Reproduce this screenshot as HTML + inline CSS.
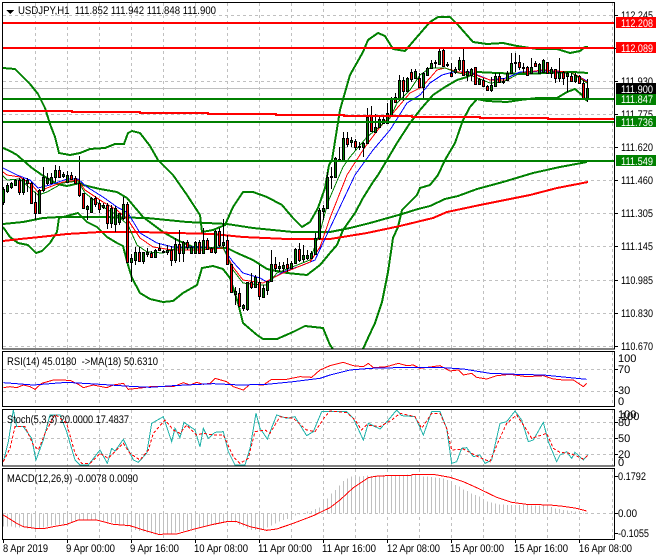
<!DOCTYPE html>
<html><head><meta charset="utf-8"><style>
html,body{margin:0;padding:0;background:#fff;width:660px;height:560px;overflow:hidden}
svg{display:block}
text{font-family:"Liberation Sans",sans-serif;font-size:11px;fill:#000}
.w{fill:#fff}
</style></head><body>
<svg width="660" height="560" viewBox="0 0 660 560" shape-rendering="crispEdges">
<rect width="660" height="560" fill="#fff"/>
<!-- grid -->
<g fill="none" stroke="#c0c0c0" stroke-dasharray="3 3">
<path d="M35.5 3V349M67.5 3V349M99.5 3V349M131.5 3V349M163.5 3V349M195.5 3V349M227.5 3V349M259.5 3V349M291.5 3V349M323.5 3V349M355.5 3V349M387.5 3V349M419.5 3V349M451.5 3V349M483.5 3V349M515.5 3V349M547.5 3V349M579.5 3V349M612.5 3V349"/>
<path d="M3 15.5H614M3 48.5H614M3 81.5H614M3 114.5H614M3 147.5H614M3 180.5H614M3 213.5H614M3 246.5H614M3 280.5H614M3 313.5H614M3 346.5H614"/>
<path d="M35.5 352V407M67.5 352V407M99.5 352V407M131.5 352V407M163.5 352V407M195.5 352V407M227.5 352V407M259.5 352V407M291.5 352V407M323.5 352V407M355.5 352V407M387.5 352V407M419.5 352V407M451.5 352V407M483.5 352V407M515.5 352V407M547.5 352V407M579.5 352V407M612.5 352V407"/>
<path d="M3 369.5H614M3 391.5H614"/>
<path d="M35.5 410V466M67.5 410V466M99.5 410V466M131.5 410V466M163.5 410V466M195.5 410V466M227.5 410V466M259.5 410V466M291.5 410V466M323.5 410V466M355.5 410V466M387.5 410V466M419.5 410V466M451.5 410V466M483.5 410V466M515.5 410V466M547.5 410V466M579.5 410V466M612.5 410V466"/>
<path d="M3 422.5H614M3 438.5H614M3 454.5H614"/>
<path d="M35.5 469V539M67.5 469V539M99.5 469V539M131.5 469V539M163.5 469V539M195.5 469V539M227.5 469V539M259.5 469V539M291.5 469V539M323.5 469V539M355.5 469V539M387.5 469V539M419.5 469V539M451.5 469V539M483.5 469V539M515.5 469V539M547.5 469V539M579.5 469V539M612.5 469V539"/>
<path d="M3 513.5H614"/>
</g>
<!-- current price line -->
<path d="M3 88.5H614" stroke="#c0c0c0" fill="none"/>
<!-- bands & long MAs -->
<g fill="none" stroke="#008000" stroke-width="2">
<polyline points="3,68 15,69 22,76 30,84 38,94 45,108 50,124 55,137 59,153 70,155 80,153 90,149 105,148 115,144 124,144 128,133 132,131 140,133 150,146 158,160 173,175 187,195 200,215 202,232 213,230 225,225 233,207 243,192 253,192 267,197 282,205 293,218 302,227 310,222 318,208 325,188 329,165 332,160 340,110 350,75 363,52 368,40 378,33 385,36 393,49 405,51 417,37 430,22 438,17 450,17 458,25 473,42 487,44 503,43 517,46 537,49 557,49 570,53 580,51 585,47 588,47"/>
<polyline points="3,227 10,237 18,243 28,245 36,253 42,251 50,243 57,232 59,218 67,216 78,213 87,222 97,227 107,237 117,243 123,246 128,265 132,278 140,293 150,299 163,302 173,301 183,293 197,285 202,268 213,266 223,269 230,278 238,303 243,323 257,335 263,339 277,339 293,332 305,326 323,328 330,345 333,349"/>
<polyline points="363,349 368,338 375,323 382,302 388,272 393,238 398,227 402,210 417,195 420,188 430,185 438,175 445,160 455,143 463,120 470,107 477,99 487,101 507,102 520,100 537,98 557,98 567,92 575,89 582,95 587,101"/>
<polyline points="3,148 10,151 17,155 25,162 32,168 42,175 57,184 67,186 80,183 83,185 100,189 117,192 127,198 143,217 163,232 177,240 193,247 213,248 227,248 237,253 253,260 267,269 287,273 307,275 320,265 330,253 337,245 343,230 355,213 363,198 373,182 378,175 387,160 397,143 410,123 420,110 433,95 445,87 457,80 467,77 477,72 497,73 523,74 547,73 573,72 588,73"/>
<polyline points="3,224 23,222 43,218 60,217 100,217 147,218 187,222 227,224 253,228 293,232 330,232 350,228 370,223 402,214 418,209 430,206 445,199 458,196 477,189 503,182 533,173 560,167 587,162"/>
</g>
<polyline fill="none" stroke="#ff0000" stroke-width="2" points="3,241 20,239 40,237 67,234 100,232 140,232 213,234 243,237 287,239 330,239 367,233 400,226 433,218 447,212 480,205 530,195 557,188 588,182"/>
<!-- thin MAs -->
<polyline fill="none" stroke="#0000ff" points="3,168 17,175 30,180 38,188 50,185 67,179 78,179 87,187 103,197 117,207 128,213 140,233 157,243 173,247 200,247 223,248 233,262 243,273 260,278 267,282 283,272 303,265 315,260 330,228 355,175 373,150 390,130 407,103 420,95 430,83 442,75 453,72 470,72 490,80 507,78 520,72 543,71 570,72 587,81"/>
<polyline fill="none" stroke="#ff0000" points="3,172 7,175 20,177 32,185 38,192 47,188 63,182 78,180 85,190 103,202 117,210 128,220 140,238 153,247 173,250 200,250 223,248 233,267 243,280 263,283 283,273 310,262 320,247 330,218 347,175 365,147 380,127 393,113 410,93 422,87 437,70 445,68 458,72 470,73 490,80 507,80 520,73 543,70 570,72 578,76 587,82"/>
<polyline fill="none" stroke="#008000" points="3,176 7,180 20,179 32,190 38,195 47,192 63,183 78,181 85,193 103,207 117,215 128,225 137,245 147,252 163,253 177,248 200,248 223,247 233,270 243,283 260,285 267,285 277,273 310,260 320,232 328,202 343,167 350,157 367,137 390,118 397,103 410,90 420,75 430,68 445,68 458,73 470,75 490,83 503,82 520,73 543,73 570,72 587,83"/>
<!-- candle wicks -->
<path fill="none" stroke="#000" d="M3.5 187V205M7.5 183V193M11.5 182V189M15.5 179V185M19.5 178V195M23.5 178V195M27.5 178V192M31.5 182V204M35.5 192V220M39.5 189V213M43.5 167V192M47.5 173V185M51.5 173V184M55.5 165V182M59.5 166V178M63.5 172V178M67.5 171V183M71.5 172V180M75.5 176V184M79.5 156V197M83.5 193V209M87.5 205V220M91.5 197V212M95.5 196V207M99.5 200V213M103.5 203V209M107.5 203V229M111.5 205V228M115.5 206V232M119.5 213V225M123.5 197V220M127.5 202V263M131.5 254V282M135.5 247V265M139.5 247V261M143.5 252V264M147.5 248V257M151.5 251V258M155.5 249V258M159.5 243V251M163.5 250V253M167.5 245V255M171.5 246V266M175.5 238V263M179.5 230V262M183.5 241V262M187.5 240V250M191.5 246V254M195.5 241V254M199.5 240V254M203.5 228V253M207.5 238V249M211.5 247V253M215.5 230V254M219.5 228V247M223.5 219V248M227.5 235V265M231.5 264V293M235.5 287V305M239.5 288V306M243.5 304V311M247.5 282V311M251.5 273V289M255.5 275V288M259.5 265V300M263.5 285V297M267.5 281V295M271.5 250V282M275.5 257V272M279.5 262V272M283.5 262V272M287.5 258V272M291.5 261V268M295.5 248V264M299.5 243V262M303.5 245V262M307.5 250V260M311.5 251V258M315.5 233V255M319.5 208V240M323.5 205V220M327.5 172V209M331.5 167V189M335.5 157V178M339.5 147V161M343.5 132V161M347.5 132V147M351.5 137V147M355.5 139V150M359.5 142V150M363.5 142V157M367.5 108V144M371.5 106V131M375.5 114V133M379.5 116V128M383.5 115V124M387.5 103V124M391.5 97V116M395.5 93V103M399.5 75V101M403.5 77V101M407.5 77V92M411.5 69V82M415.5 69V79M419.5 73V88M423.5 72V98M427.5 67V76M431.5 60V69M435.5 60V68M439.5 49V65M443.5 47V67M447.5 62V67M451.5 63V77M455.5 67V74M459.5 57V71M463.5 47V76M467.5 69V81M471.5 68V81M475.5 67V85M479.5 78V85M483.5 78V87M487.5 85V91M491.5 77V92M495.5 73V87M499.5 73V83M503.5 78V84M507.5 71V81M511.5 53V74M515.5 53V72M519.5 55V70M523.5 63V73M527.5 66V76M531.5 58V74M535.5 61V67M539.5 63V74M543.5 59V73M547.5 62V74M551.5 67V78M555.5 69V83M559.5 58V82M563.5 71V85M567.5 72V92M571.5 73V82M575.5 73V83M579.5 75V84M583.5 80V99M587.5 79V102"/>
<g transform="translate(0,.5)" stroke="#000">
<path fill="#008000" d="M2.5 189h2V202h-2zM6.5 185h2V191h-2zM10.5 183h2V187h-2zM14.5 180h2V185h-2zM22.5 179h2V192h-2zM26.5 180h2V183h-2zM38.5 190h2V213h-2zM42.5 177h2V190h-2zM46.5 178h2V183h-2zM50.5 177h2V183h-2zM54.5 170h2V177h-2zM62.5 174h2V176h-2zM66.5 175h2V182h-2zM86.5 206h2V209h-2zM90.5 198h2V212h-2zM102.5 205h2V207h-2zM110.5 208h2V223h-2zM114.5 208h2V224h-2zM118.5 213h2V222h-2zM122.5 204h2V218h-2zM130.5 258h2V262h-2zM134.5 252h2V260h-2zM142.5 252h2V261h-2zM146.5 252h2V254h-2zM154.5 250h2V257h-2zM162.5 251h2V252h-2zM166.5 250h2V252h-2zM174.5 244h2V260h-2zM182.5 242h2V253h-2zM190.5 247h2V253h-2zM194.5 242h2V253h-2zM202.5 240h2V253h-2zM214.5 231h2V252h-2zM222.5 242h2V245h-2zM234.5 291h2V294h-2zM242.5 305h2V308h-2zM246.5 282h2V309h-2zM254.5 277h2V287h-2zM262.5 288h2V297h-2zM266.5 281h2V290h-2zM270.5 264h2V281h-2zM278.5 266h2V268h-2zM282.5 265h2V268h-2zM290.5 263h2V268h-2zM294.5 249h2V263h-2zM302.5 255h2V259h-2zM306.5 255h2V258h-2zM310.5 253h2V258h-2zM314.5 238h2V254h-2zM318.5 210h2V238h-2zM322.5 208h2V211h-2zM326.5 177h2V208h-2zM330.5 176h2V177h-2zM334.5 158h2V177h-2zM338.5 159h2V160h-2zM342.5 138h2V160h-2zM350.5 140h2V142h-2zM358.5 146h2V147h-2zM362.5 143h2V147h-2zM366.5 117h2V143h-2zM374.5 127h2V132h-2zM378.5 119h2V127h-2zM382.5 119h2V123h-2zM386.5 113h2V123h-2zM390.5 99h2V115h-2zM398.5 80h2V99h-2zM406.5 78h2V91h-2zM414.5 71h2V78h-2zM422.5 73h2V87h-2zM426.5 68h2V75h-2zM430.5 63h2V68h-2zM434.5 62h2V63h-2zM438.5 51h2V64h-2zM446.5 64h2V65h-2zM454.5 69h2V72h-2zM458.5 60h2V69h-2zM466.5 71h2V75h-2zM470.5 69h2V75h-2zM478.5 79h2V84h-2zM490.5 85h2V90h-2zM494.5 76h2V86h-2zM502.5 81h2V82h-2zM506.5 73h2V80h-2zM510.5 63h2V73h-2zM514.5 62h2V63h-2zM522.5 67h2V68h-2zM530.5 67h2V73h-2zM538.5 64h2V73h-2zM542.5 60h2V72h-2zM550.5 69h2V73h-2zM558.5 72h2V78h-2zM566.5 73h2V76h-2zM574.5 75h2V81h-2zM586.5 88h2V98h-2z"/>
<path fill="#ff0000" d="M18.5 180h2V192h-2zM30.5 183h2V203h-2zM34.5 202h2V213h-2zM58.5 170h2V177h-2zM70.5 175h2V179h-2zM74.5 178h2V183h-2zM78.5 183h2V195h-2zM82.5 193h2V208h-2zM94.5 198h2V204h-2zM98.5 203h2V209h-2zM106.5 205h2V223h-2zM126.5 204h2V262h-2zM138.5 252h2V261h-2zM150.5 253h2V257h-2zM158.5 248h2V250h-2zM170.5 250h2V260h-2zM178.5 244h2V253h-2zM186.5 242h2V247h-2zM198.5 242h2V253h-2zM206.5 240h2V249h-2zM210.5 248h2V252h-2zM218.5 231h2V245h-2zM226.5 240h2V264h-2zM230.5 264h2V292h-2zM238.5 293h2V306h-2zM250.5 282h2V287h-2zM258.5 282h2V296h-2zM274.5 264h2V268h-2zM286.5 264h2V268h-2zM298.5 249h2V260h-2zM346.5 138h2V144h-2zM354.5 141h2V147h-2zM370.5 116h2V131h-2zM394.5 97h2V102h-2zM402.5 80h2V91h-2zM410.5 72h2V79h-2zM418.5 78h2V87h-2zM442.5 50h2V66h-2zM450.5 73h2V76h-2zM462.5 60h2V75h-2zM474.5 67h2V84h-2zM482.5 80h2V86h-2zM486.5 86h2V90h-2zM498.5 76h2V82h-2zM518.5 62h2V67h-2zM526.5 67h2V75h-2zM534.5 63h2V66h-2zM546.5 62h2V73h-2zM554.5 69h2V78h-2zM562.5 72h2V78h-2zM570.5 76h2V81h-2zM578.5 76h2V83h-2zM582.5 83h2V98h-2z"/>
</g>
<!-- horizontal levels -->
<g fill="none" stroke-width="2">
<path stroke="#ff0000" d="M3 23H615M3 48H615"/>
<path stroke="#ff0000" d="M3 111H72V112H140V113H208V114H276V115H344V116H412V117H480V118H548V119H614"/>
<path stroke="#008000" d="M3 99H615M3 122H615M3 161H615"/>
</g>
<!-- RSI -->
<g transform="translate(0,345) scale(.33333)" fill="none" stroke-width="3">
<polyline stroke="#ff0000" points="10,128 30,125 50,128 70,120 90,125 105,133 125,115 160,105 210,106 235,118 250,128 280,120 320,128 340,120 370,115 385,133 430,128 450,125 480,125 520,125 550,113 570,120 590,112 610,118 630,115 645,100 680,110 700,125 730,135 750,118 790,120 815,103 860,103 900,95 935,97 960,75 990,62 1030,52 1060,62 1090,65 1105,55 1120,68 1160,65 1195,55 1220,62 1240,60 1260,70 1320,62 1350,78 1375,75 1390,90 1415,85 1430,97 1460,102 1490,92 1530,88 1580,95 1630,92 1660,102 1690,105 1720,105 1750,125 1760,115"/>
<polyline stroke="#0000ff" points="10,113 100,120 200,112 300,118 390,124 450,127 520,122 640,116 720,120 800,118 880,110 960,100 990,90 1050,75 1110,70 1190,68 1260,68 1330,68 1390,72 1470,85 1550,88 1630,90 1760,103"/>
</g>
<!-- Stoch -->
<g transform="translate(0,345) scale(.33333)" fill="none" stroke-width="3">
<polyline stroke="#20b2aa" points="10,350 25,290 40,195 50,245 70,245 95,280 108,345 130,285 150,210 180,210 200,260 225,345 240,360 265,360 300,315 322,355 335,310 345,318 370,283 400,345 415,352 440,325 455,235 490,215 515,290 525,250 540,278 552,232 585,255 600,305 610,250 625,280 645,262 670,260 685,320 705,360 735,360 750,310 768,205 780,250 802,282 830,210 860,220 885,215 920,272 940,260 965,200 990,200 1040,200 1060,220 1090,285 1105,235 1140,252 1165,225 1190,195 1205,212 1245,215 1270,270 1295,200 1320,200 1340,250 1355,355 1370,350 1385,310 1400,308 1420,335 1440,330 1455,355 1475,345 1500,235 1520,230 1545,198 1565,225 1585,290 1600,285 1630,232 1645,290 1670,350 1680,330 1700,320 1715,340 1725,322 1750,345 1765,328"/>
<polyline stroke="#ff0000" stroke-dasharray="9 6" points="10,350 30,310 45,245 75,245 100,300 115,315 135,265 165,208 200,235 225,325 245,355 270,355 300,325 325,340 370,295 390,325 420,345 445,315 460,265 495,225 520,255 540,265 560,240 590,270 610,265 640,270 670,270 700,335 720,355 745,340 765,260 795,255 810,265 840,215 880,220 920,255 945,260 975,215 990,198 1040,203 1065,225 1085,255 1100,240 1140,245 1175,225 1200,205 1245,215 1265,250 1295,205 1320,205 1340,250 1355,315 1390,312 1420,328 1445,340 1470,350 1495,290 1520,235 1550,210 1580,255 1595,280 1640,265 1660,310 1680,322 1710,325 1750,342 1765,330"/>
</g>
<!-- MACD -->
<g transform="translate(0,345) scale(.33333)" fill="none" stroke-width="3">
<path stroke="#c0c0c0" d="M10.5 505V545M22.5 505V545M34.5 505V545M46.5 505V547M58.5 505V548M70.5 505V548M82.5 505V550M94.5 505V550M106.5 505V552M118.5 505V550M130.5 505V548M142.5 505V545M154.5 505V542M166.5 505V540M178.5 505V538M190.5 505V537M202.5 505V535M214.5 505V533M226.5 505V530M238.5 505V526M250.5 505V525M262.5 505V525M274.5 505V525M286.5 505V525M298.5 505V526M310.5 505V528M322.5 505V530M334.5 505V532M346.5 505V535M358.5 505V538M370.5 505V540M382.5 505V545M394.5 505V550M406.5 505V555M418.5 505V558M430.5 505V560M442.5 505V562M454.5 505V565M466.5 505V568M478.5 505V568M490.5 505V568M502.5 505V567M514.5 505V566M526.5 505V563M538.5 505V560M550.5 505V558M562.5 505V555M574.5 505V552M586.5 505V550M598.5 505V548M610.5 505V546M622.5 505V545M634.5 505V542M646.5 505V540M658.5 505V537M670.5 505V533M682.5 505V530M694.5 505V530M706.5 505V533M718.5 505V540M730.5 505V545M742.5 505V550M754.5 505V555M766.5 505V555M778.5 505V556M790.5 505V553M802.5 505V548M814.5 505V542M826.5 505V535M838.5 505V530M850.5 505V525M862.5 505V522M874.5 505V518M886.5 505V512M898.5 505V508M910.5 505V506M922.5 505V500M934.5 505V498M946.5 505V492M958.5 505V488M970.5 505V470M982.5 505V460M994.5 505V445M1006.5 505V435M1018.5 505V422M1030.5 505V408M1042.5 505V400M1054.5 505V395M1066.5 505V395M1078.5 505V395M1090.5 505V393M1102.5 505V391M1114.5 505V393M1126.5 505V392M1138.5 505V391M1150.5 505V390M1162.5 505V390M1174.5 505V390M1186.5 505V390M1198.5 505V390M1210.5 505V390M1222.5 505V389M1234.5 505V388M1246.5 505V390M1258.5 505V393M1270.5 505V395M1282.5 505V395M1294.5 505V396M1306.5 505V398M1318.5 505V399M1330.5 505V400M1342.5 505V405M1354.5 505V412M1366.5 505V420M1378.5 505V425M1390.5 505V433M1402.5 505V438M1414.5 505V445M1426.5 505V450M1438.5 505V455M1450.5 505V462M1462.5 505V470M1474.5 505V473M1486.5 505V476M1498.5 505V478M1510.5 505V478M1522.5 505V480M1534.5 505V480M1546.5 505V480M1558.5 505V480M1570.5 505V480M1582.5 505V480M1594.5 505V481M1606.5 505V481M1618.5 505V482M1630.5 505V482M1642.5 505V484M1654.5 505V486M1666.5 505V490M1678.5 505V492M1690.5 505V495M1702.5 505V497M1714.5 505V498M1726.5 505V500M1738.5 505V501M1750.5 505V502M1762.5 505V503"/>
<polyline stroke="#ff0000" points="10,510 50,535 70,545 105,550 135,550 160,545 200,538 235,525 290,525 340,538 390,542 430,555 475,568 530,567 580,553 640,538 680,530 710,530 750,545 800,556 830,552 880,535 940,512 990,488 1020,465 1060,428 1105,398 1125,394 1160,392 1230,392 1240,388 1300,388 1350,397 1390,410 1430,428 1490,457 1535,472 1580,478 1650,480 1690,484 1730,490 1760,498"/>
</g>
<!-- panel frames -->
<g fill="none" stroke="#000">
<rect x="2.5" y="2.5" width="612" height="346.5"/>
<rect x="2.5" y="351.5" width="612" height="55"/>
<rect x="2.5" y="409.5" width="612" height="56.5"/>
<rect x="2.5" y="468.5" width="612" height="71"/>
<path d="M615 15.5h3M615 48.5h3M615 81.5h3M615 114.5h3M615 147.5h3M615 180.5h3M615 213.5h3M615 246.5h3M615 280.5h3M615 313.5h3M615 346.5h3M615 369.5h3M615 391.5h3M615 422.5h3M615 438.5h3M615 454.5h3M615 476.5h3M615 513.5h3M615 533.5h3"/>
<path d="M3.5 540v3M67.5 540v3M131.5 540v3M195.5 540v3M259.5 540v3M323.5 540v3M387.5 540v3M451.5 540v3M515.5 540v3M579.5 540v3"/>
</g>
<!-- header -->
<path d="M6 10h8l-4 4z" fill="#000"/>
<g text-rendering="geometricPrecision">
<text x="18" y="14" textLength="198" lengthAdjust="spacingAndGlyphs" xml:space="preserve">USDJPY,H1  111.852 111.942 111.848 111.900</text>
<text x="7" y="365" textLength="151" lengthAdjust="spacingAndGlyphs" xml:space="preserve">RSI(14) 45.0180  -&gt;MA(18) 50.6310</text>
<text x="7" y="423" textLength="122" lengthAdjust="spacingAndGlyphs">Stoch(5,3,3) 20.0000 17.4837</text>
<text x="7" y="482" textLength="131" lengthAdjust="spacingAndGlyphs">MACD(12,26,9) -0.0078 0.0090</text>
<!-- price axis -->
<text x="621" y="19" textLength="32" lengthAdjust="spacingAndGlyphs">112.245</text>
<text x="621" y="85" textLength="32" lengthAdjust="spacingAndGlyphs">111.930</text>
<text x="621" y="118" textLength="32" lengthAdjust="spacingAndGlyphs">111.775</text>
<text x="621" y="151" textLength="32" lengthAdjust="spacingAndGlyphs">111.620</text>
<text x="621" y="184" textLength="32" lengthAdjust="spacingAndGlyphs">111.460</text>
<text x="621" y="217" textLength="32" lengthAdjust="spacingAndGlyphs">111.305</text>
<text x="621" y="250" textLength="32" lengthAdjust="spacingAndGlyphs">111.145</text>
<text x="621" y="284" textLength="32" lengthAdjust="spacingAndGlyphs">110.985</text>
<text x="621" y="317" textLength="32" lengthAdjust="spacingAndGlyphs">110.830</text>
<text x="621" y="350" textLength="32" lengthAdjust="spacingAndGlyphs">110.670</text>
<!-- price boxes -->
<rect x="616" y="17" width="40" height="11" fill="#ff0000"/>
<rect x="616" y="42" width="40" height="11" fill="#ff0000"/>
<rect x="616" y="83" width="40" height="11" fill="#000"/>
<rect x="616" y="94" width="40" height="11" fill="#008000"/>
<rect x="616" y="116" width="40" height="11" fill="#008000"/>
<rect x="616" y="155" width="40" height="11" fill="#008000"/>
<text class="w" x="621" y="27" textLength="32" lengthAdjust="spacingAndGlyphs">112.208</text>
<text class="w" x="621" y="52" textLength="32" lengthAdjust="spacingAndGlyphs">112.089</text>
<text class="w" x="621" y="93" textLength="32" lengthAdjust="spacingAndGlyphs">111.900</text>
<text class="w" x="621" y="103" textLength="32" lengthAdjust="spacingAndGlyphs">111.847</text>
<text class="w" x="621" y="126" textLength="32" lengthAdjust="spacingAndGlyphs">111.736</text>
<text class="w" x="621" y="165" textLength="32" lengthAdjust="spacingAndGlyphs">111.549</text>
<!-- indicator axes -->
<text x="618" y="362">100</text>
<text x="618" y="373">70</text>
<text x="618" y="394">30</text>
<text x="618" y="405">0</text>
<text x="618" y="418">100</text>
<text x="621" y="420">100</text>
<text x="618" y="426">80</text>
<text x="618" y="442">50</text>
<text x="618" y="458">20</text>
<text x="618" y="466">0</text>
<text x="618" y="480" textLength="28" lengthAdjust="spacingAndGlyphs">0.1792</text>
<text x="618" y="517" textLength="19" lengthAdjust="spacingAndGlyphs">0.00</text>
<text x="618" y="537" textLength="31" lengthAdjust="spacingAndGlyphs">-0.1055</text>
<!-- time axis -->
<text x="3" y="552" textLength="45" lengthAdjust="spacingAndGlyphs">8 Apr 2019</text>
<text x="66" y="552" textLength="49" lengthAdjust="spacingAndGlyphs">9 Apr 00:00</text>
<text x="130" y="552" textLength="49" lengthAdjust="spacingAndGlyphs">9 Apr 16:00</text>
<text x="194" y="552" textLength="54" lengthAdjust="spacingAndGlyphs">10 Apr 08:00</text>
<text x="258" y="552" textLength="54" lengthAdjust="spacingAndGlyphs">11 Apr 00:00</text>
<text x="322" y="552" textLength="54" lengthAdjust="spacingAndGlyphs">11 Apr 16:00</text>
<text x="387" y="552" textLength="53" lengthAdjust="spacingAndGlyphs">12 Apr 08:00</text>
<text x="450" y="552" textLength="54" lengthAdjust="spacingAndGlyphs">15 Apr 00:00</text>
<text x="514" y="552" textLength="54" lengthAdjust="spacingAndGlyphs">15 Apr 16:00</text>
<text x="579" y="552" textLength="53" lengthAdjust="spacingAndGlyphs">16 Apr 08:00</text>
</g>
</svg>
</body></html>
